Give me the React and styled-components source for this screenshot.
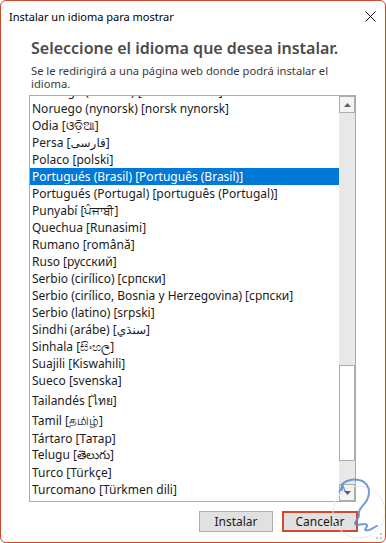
import styled, { createGlobalStyle } from "styled-components";

const GlobalStyle = createGlobalStyle`
  html, body {
    margin: 0;
    padding: 0;
    background: #ffffff;
  }
  body {
    font-family: "Noto Sans", "DejaVu Sans", sans-serif;
  }
`;

const Window = styled.div`
  position: relative;
  box-sizing: border-box;
  width: 386px;
  height: 543px;
  border: 1px solid #cf4a2a;
  border-radius: 6px;
  background: #ffffff;
  display: flex;
  flex-direction: column;
  overflow: hidden;
`;

const TitleBar = styled.div`
  height: 31px;
  display: flex;
  align-items: center;
  justify-content: space-between;
  padding: 0 9px 0 8px;
  font-size: 11px;
  color: #000000;
`;

const CloseButton = styled.div`
  width: 11px;
  height: 11px;
  display: flex;
  align-items: center;
  justify-content: center;
`;

const Body = styled.div`
  display: flex;
  flex-direction: column;
  padding: 6px 29px 0 28px;
`;

const Heading = styled.h1`
  margin: 0;
  font-size: 16px;
  line-height: 20px;
  font-weight: 600;
  color: #4b4b4b;
  padding-left: 2px;
`;

const Subtitle = styled.p`
  margin: 6px 0 0;
  font-size: 11.2px;
  line-height: 13px;
  color: #3a3a3a;
  padding-left: 2px;
`;

const ListBox = styled.div`
  margin-top: 5px;
  height: 407px;
  box-sizing: border-box;
  border: 1px solid #ababab;
  display: flex;
`;

const Items = styled.div`
  flex: 1;
  overflow: hidden;
`;

const ItemsInner = styled.div`
  margin-top: -13px;
`;

const Item = styled.div`
  height: ${(p) => p.$height || 17}px;
  display: flex;
  align-items: center;
  padding-left: 2px;
  font-size: 12px;
  white-space: nowrap;
  color: ${(p) => (p.$selected ? "#ffffff" : "#1b1b1b")};
  background: ${(p) => (p.$selected ? "#0078d7" : "transparent")};
`;

const ScrollBar = styled.div`
  width: 16px;
  background: #e8e8e8;
  display: flex;
  flex-direction: column;
`;

const ArrowButton = styled.div`
  height: 17px;
  box-sizing: border-box;
  border: 1px solid #adadad;
  background: #f4f4f4;
  display: flex;
  align-items: center;
  justify-content: center;
`;

const Track = styled.div`
  flex: 1;
  display: flex;
  flex-direction: column;
  padding-top: ${(p) => p.$before}px;
  padding-bottom: ${(p) => p.$after}px;
`;

const Thumb = styled.div`
  flex: 1;
  box-sizing: border-box;
  border: 1px solid #ababab;
  background: #ffffff;
`;

const Footer = styled.div`
  display: flex;
  justify-content: flex-end;
  gap: 9px;
  padding: 9px 27px 0 0;
`;

const Button = styled.button`
  box-sizing: border-box;
  width: ${(p) => p.$width}px;
  height: 21px;
  padding: 0;
  font-family: inherit;
  font-size: 12px;
  color: #1b1b1b;
  background: #e1e1e1;
  border: ${(p) => (p.$focused ? "2px solid #d24a2b" : "1px solid #adadad")};
`;

const Watermark = styled.svg`
  position: absolute;
  right: 0;
  bottom: 0;
  pointer-events: none;
`;

const languages = [
  "Noruego (bokmål) [norsk bokmål]",
  "Noruego (nynorsk) [norsk nynorsk]",
  "Odia [ଓଡ଼ିଆ]",
  "Persa [فارسی]",
  "Polaco [polski]",
  "Portugués (Brasil) [Português (Brasil)]",
  "Portugués (Portugal) [português (Portugal)]",
  "Punyabí [ਪੰਜਾਬੀ]",
  "Quechua [Runasimi]",
  "Rumano [română]",
  "Ruso [русский]",
  "Serbio (cirílico) [српски]",
  "Serbio (cirílico, Bosnia y Herzegovina) [српски]",
  "Serbio (latino) [srpski]",
  "Sindhi (arábe) [سنڌي]",
  "Sinhala [සිංහල]",
  "Suajili [Kiswahili]",
  "Sueco [svenska]",
  "Tailandés [ไทย]",
  "Tamil [தமிழ்]",
  "Tártaro [Татар]",
  "Telugu [తెలుగు]",
  "Turco [Türkçe]",
  "Turcomano [Türkmen dili]",
];

const heights = { "Tailandés [ไทย]": 22, "Tamil [தமிழ்]": 19 };
const selected = "Portugués (Brasil) [Português (Brasil)]";

const App = () => {
  return (
    <>
      <GlobalStyle />
      <Window>
        <TitleBar>
          <span>Instalar un idioma para mostrar</span>
          <CloseButton>
            <svg width="11" height="11" viewBox="0 0 11 11">
              <path d="M0.5 0.5 L10.5 10.5 M10.5 0.5 L0.5 10.5" stroke="#111" strokeWidth="1" />
            </svg>
          </CloseButton>
        </TitleBar>
        <Body>
          <Heading>Seleccione el idioma que desea instalar.</Heading>
          <Subtitle>
            Se le redirigirá a una página web donde podrá instalar el
            <br />
            idioma.
          </Subtitle>
          <ListBox>
            <Items>
              <ItemsInner>
                {languages.map((lang) => (
                  <Item key={lang} $height={heights[lang]} $selected={lang === selected}>
                    {lang}
                  </Item>
                ))}
              </ItemsInner>
            </Items>
            <ScrollBar>
              <ArrowButton>
                <svg width="7" height="4" viewBox="0 0 7 4">
                  <path d="M0 4 L3.5 0 L7 4 Z" fill="#606060" />
                </svg>
              </ArrowButton>
              <Track $before={252} $after={23}>
                <Thumb />
              </Track>
              <ArrowButton>
                <svg width="7" height="4" viewBox="0 0 7 4">
                  <path d="M0 0 L3.5 4 L7 0 Z" fill="#606060" />
                </svg>
              </ArrowButton>
            </ScrollBar>
          </ListBox>
        </Body>
        <Footer>
          <Button $width={74}>Instalar</Button>
          <Button $width={76} $focused>
            Cancelar
          </Button>
        </Footer>
        <Watermark width="60" height="66" viewBox="0 0 60 66">
          <circle cx="34" cy="36" r="26" fill="none" stroke="#e3e9f2" strokeWidth="1" />
          <path
            d="M17 14 C 14 6, 26 2, 34 4 C 44 6, 46 16, 42 24 C 39 30, 33 32, 34 38 C 35 42, 30 44, 30 48 C 31 51, 40 46, 42 49 C 43 52, 36 55, 44 54 C 48 53, 50 50, 52 50"
            fill="none"
            stroke="#5a8acb"
            strokeWidth="2"
            strokeLinecap="round"
            opacity="0.85"
          />
          <path d="M14 16 L18 10 L20 15" fill="none" stroke="#5a8acb" strokeWidth="1.5" opacity="0.85" />
          <g fill="#c9c9c9">
            <rect x="55" y="57" width="2" height="2" />
            <rect x="55" y="61" width="2" height="2" />
            <rect x="51" y="61" width="2" height="2" />
          </g>
        </Watermark>
      </Window>
    </>
  );
};

export default App;
